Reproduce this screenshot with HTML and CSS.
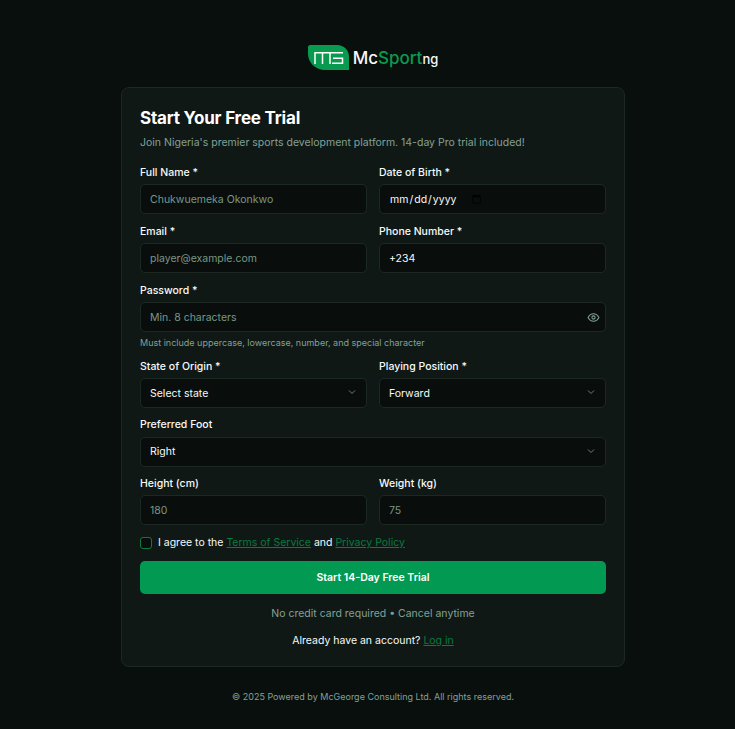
FILE: index.html
```html
<!DOCTYPE html>
<html lang="en">
<head>
<meta charset="utf-8">
<title>McSportng</title>
<link rel="stylesheet" href="styles.css">
</head>
<body>
<main class="page">
  <a class="logo" href="#">
    <svg class="logo-mark" width="41" height="25" viewBox="0 0 41 25">
      <path class="logo-shape" d="M2 0H29C36 0 41 5 41 12V25H17C8 25 0 18 0 9V2C0 1 1 0 2 0Z"/>
      <path class="logo-line" d="M7 19V7.750H35M14.500 7.750V19M22 7.750V19M25 13.250H34.500V18.250H24"/>
    </svg>
    <span class="logo-text">Mc<em>Sport</em><small>ng</small></span>
  </a>
  <form class="card">
    <h1>Start Your Free Trial</h1>
    <p class="lead">Join Nigeria's premier sports development platform. 14-day Pro trial included!</p>
    <div class="grid two">
      <label class="field"><span>Full Name *</span><input type="text" placeholder="Chukwuemeka Okonkwo"></label>
      <label class="field"><span>Date of Birth *</span><input type="date"></label>
    </div>
    <div class="grid two">
      <label class="field"><span>Email *</span><input type="email" placeholder="player@example.com"></label>
      <label class="field"><span>Phone Number *</span><input type="tel" value="+234"></label>
    </div>
    <div class="field-block">
      <label class="field"><span>Password *</span>
        <div class="pw">
          <input type="password" placeholder="Min. 8 characters">
          <svg class="eye" width="13" height="13" viewBox="0 0 24 24"><path d="M2 12s3.600-7 10-7 10 7 10 7-3.600 7-10 7-10-7-10-7Z"/><circle cx="12" cy="12" r="3"/></svg>
        </div>
      </label>
      <p class="hint">Must include uppercase, lowercase, number, and special character</p>
    </div>
    <div class="grid two tight">
      <label class="field"><span>State of Origin *</span>
        <div class="sel"><select><option>Select state</option></select><svg class="chev" width="12" height="12" viewBox="0 0 24 24"><path d="m6 9 6 6 6-6"/></svg></div>
      </label>
      <label class="field"><span>Playing Position *</span>
        <div class="sel"><select><option>Forward</option></select><svg class="chev" width="12" height="12" viewBox="0 0 24 24"><path d="m6 9 6 6 6-6"/></svg></div>
      </label>
    </div>
    <div class="grid tight">
      <label class="field"><span>Preferred Foot</span>
        <div class="sel"><select><option>Right</option></select><svg class="chev" width="12" height="12" viewBox="0 0 24 24"><path d="m6 9 6 6 6-6"/></svg></div>
      </label>
    </div>
    <div class="grid two tight">
      <label class="field"><span>Height (cm)</span><input type="number" placeholder="180"></label>
      <label class="field"><span>Weight (kg)</span><input type="number" placeholder="75"></label>
    </div>
    <div class="agree">
      <span class="check"></span>
      <span class="agree-text">I agree to the <a href="#">Terms of Service</a> and <a href="#">Privacy Policy</a></span>
    </div>
    <button type="button" class="submit">Start 14-Day Free Trial</button>
    <p class="note">No credit card required • Cancel anytime</p>
    <p class="login">Already have an account? <a href="#">Log in</a></p>
  </form>
  <footer class="foot">© 2025 Powered by McGeorge Consulting Ltd. All rights reserved.</footer>
</main>
</body>
</html>
```
FILE: styles.css
```css
* { box-sizing: border-box; }
html, body { margin: 0; height: 100%; }
body {
  background: #090f0d;
  color: #f7fafa;
  font-family: Inter, "Liberation Sans", sans-serif;
  font-size: 10.5px;
}
.page {
  display: flex;
  flex-direction: column;
  align-items: center;
  padding: 45px 0 0 11px;
}
.logo {
  display: flex;
  align-items: center;
  gap: 4px;
  height: 25px;
  margin-bottom: 17px;
  text-decoration: none;
  color: #f7fafa;
}
.logo-mark { display: block; }
.logo-shape { fill: #0a9a4f; }
.logo-line { fill: none; stroke: #fff; stroke-width: 1.5; }
.logo-text { font-size: 17px; font-weight: 500; }
.logo-text em { font-style: normal; color: #0a9a4f; }
.logo-text small { font-size: 13px; font-weight: 500; }
.card {
  width: 504px;
  height: 580px;
  padding: 18px;
  background: #0f1815;
  border: 1px solid #1d2823;
  border-radius: 8px;
  display: flex;
  flex-direction: column;
}
h1 {
  margin: 0;
  font-size: 17px;
  line-height: 24px;
  font-weight: 700;
  letter-spacing: -0.2px;
  color: #fff;
}
.lead {
  margin: 5px 0 15.5px;
  font-size: 10.5px;
  line-height: 16px;
  color: #84a095;
}
.grid { display: grid; gap: 12px; margin-bottom: 11.5px; }
.tight { margin-bottom: 11px; }
.two { grid-template-columns: 1fr 1fr; }
.field-block { margin-bottom: 11.5px; }
.field { display: flex; flex-direction: column; gap: 5.5px; min-width: 0; }
.field > span { font-size: 10.5px; line-height: 12px; font-weight: 500; color: #f7fafa; }
input, select {
  width: 100%;
  height: 30px;
  padding: 0 9px;
  background: #090e0c;
  border: 1px solid #1d2823;
  border-radius: 5px;
  color: #f7fafa;
  font: 10.5px Inter, "Liberation Sans", sans-serif;
  outline: none;
}
input::placeholder { color: #7a9686; opacity: 1; }
input[type=date]::-webkit-datetime-edit { flex: 0 0 auto; }
input[type=date]::-webkit-calendar-picker-indicator { margin: 0 auto 0 -3px; }
select { appearance: none; }
input[type=number] { appearance: textfield; }
.pw, .sel { position: relative; display: block; }
.eye {
  position: absolute;
  right: 6.5px;
  top: 8.5px;
  fill: none;
  stroke: #84a095;
  stroke-width: 2;
}
.chev {
  position: absolute;
  right: 9px;
  top: 8px;
  fill: none;
  stroke: #6b7f77;
  stroke-width: 2;
}
.hint {
  margin: 5px 0 0;
  font-size: 9px;
  line-height: 12px;
  color: #84a095;
}
.agree {
  display: flex;
  align-items: center;
  gap: 6px;
  height: 13px;
  margin: 0.5px 0 11.5px;
  font-size: 10.5px;
}
.agree-text { margin-top: -1px; }
.check {
  width: 12px;
  height: 12px;
  border: 1px solid #0a7a40;
  border-radius: 3px;
  background: #090e0c;
}
.agree a, .login a { color: #0a7a40; }
.submit {
  width: 100%;
  height: 33px;
  border: 0;
  border-radius: 5px;
  background: #029a52;
  color: #fff;
  font: 600 10.5px Inter, "Liberation Sans", sans-serif;
}
.note {
  margin: 13px 0 0;
  text-align: center;
  line-height: 14px;
  color: #84a095;
}
.login {
  margin: 13px 0 0;
  text-align: center;
  line-height: 14px;
}
.foot {
  margin-top: 24px;
  font-size: 9px;
  line-height: 12px;
  color: #84a095;
}
```
